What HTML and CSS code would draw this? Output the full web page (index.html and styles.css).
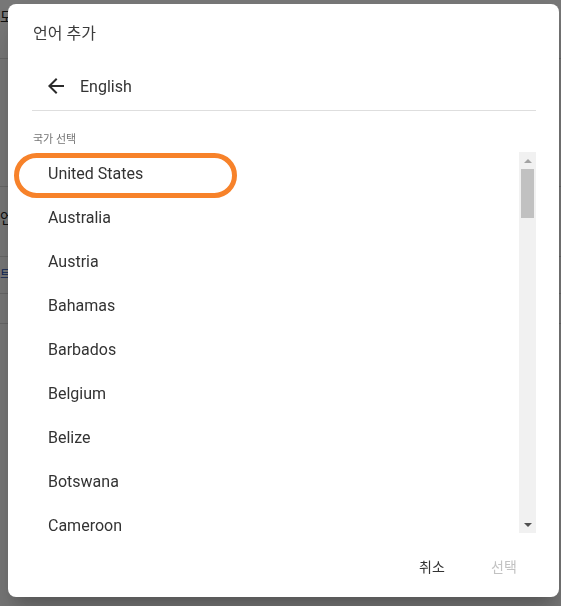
FILE: index.html
```html
<!DOCTYPE html>
<html lang="ko">
<head>
<meta charset="utf-8">
<title>언어 추가</title>
<link rel="stylesheet" href="styles.css">
</head>
<body>
<div class="page">
  <div class="page-row page-row-top"><span class="page-text">도구</span></div>
  <div class="page-row page-row-tall"></div>
  <div class="page-row page-row-mid"><span class="page-text">언어</span></div>
  <div class="page-row page-row-link"><span class="page-link">트랜스</span></div>
  <div class="page-row page-row-small"></div>
</div>
<div class="scrim"></div>
<div class="dialog">
  <div class="dialog-title">언어 추가</div>
  <div class="nav-row">
    <svg class="back-icon" viewBox="0 0 24 24" width="24" height="24" aria-hidden="true">
      <path d="M20 11H7.83l5.59-5.59L12 4l-8 8 8 8 1.41-1.41L7.83 13H20v-2z" fill="#2b2b2b"/>
    </svg>
    <span class="nav-text">English</span>
  </div>
  <div class="section-label">국가 선택</div>
  <div class="list-wrap">
    <ul class="country-list">
      <li>United States</li>
      <li>Australia</li>
      <li>Austria</li>
      <li>Bahamas</li>
      <li>Barbados</li>
      <li>Belgium</li>
      <li>Belize</li>
      <li>Botswana</li>
      <li>Cameroon</li>
    </ul>
    <div class="scrollbar">
      <div class="sb-btn"><span class="tri-up"></span></div>
      <div class="sb-track"><div class="sb-thumb"></div></div>
      <div class="sb-btn"><span class="tri-down"></span></div>
    </div>
  </div>
  <div class="actions">
    <button class="btn">취소</button>
    <button class="btn btn-disabled">선택</button>
  </div>
  <div class="highlight-ring"></div>
</div>
</body>
</html>
```
FILE: styles.css
```css
html, body {
  margin: 0;
  padding: 0;
}
body {
  width: 561px;
  height: 606px;
  overflow: hidden;
  background: #ffffff;
  font-family: Roboto, "Noto Sans CJK KR", sans-serif;
  position: relative;
}
.page {
  display: flex;
  flex-direction: column;
}
.page-row {
  border-bottom: 1px solid #dcdcdc;
  box-sizing: border-box;
  font-size: 14px;
  color: #222;
}
.page-row-top { height: 59px; padding-top: 6px; }
.page-row-tall { height: 128px; }
.page-row-mid { height: 70px; padding-top: 20px; }
.page-row-link { height: 37px; padding-top: 8px; }
.page-row-small { height: 30px; }
.page-link { color: #1a4fb8; font-size: 12px; }

.scrim {
  position: fixed;
  inset: 0;
  background: rgba(0, 0, 0, 0.535);
}
.dialog {
  position: fixed;
  left: 8px;
  top: 4px;
  width: 551px;
  height: 593px;
  background: #ffffff;
  border-radius: 8px;
  box-shadow: 0 11px 15px -7px rgba(0,0,0,.2), 0 24px 38px 3px rgba(0,0,0,.14);
  display: flex;
  flex-direction: column;
  color: #333;
}
.dialog-title {
  padding: 18px 25px 16px;
  font-size: 16px;
  line-height: 24px;
  color: #3c3c3c;
}
.nav-row {
  margin: 0 23px 0 24px;
  height: 48px;
  border-bottom: 1px solid #dedede;
  display: flex;
  align-items: center;
  gap: 12px;
  padding-left: 12px;
}
.back-icon { display: block; }
.nav-text {
  font-size: 16px;
  color: #333;
}
.section-label {
  padding: 21px 25px 0;
  margin-bottom: 4px;
  font-size: 11px;
  line-height: 16px;
  color: #757575;
}
.list-wrap {
  margin: 0 23px 0 24px;
  height: 381px;
  display: flex;
}
.country-list {
  flex: 1;
  list-style: none;
  margin: 0;
  padding: 0;
}
.country-list li {
  box-sizing: border-box;
  height: 44px;
  line-height: 14px;
  padding: 15px 0 15px 16px;
  font-size: 16px;
  color: #333;
}
.country-list li:last-child {
  height: 29px;
  padding-bottom: 0;
}
.scrollbar {
  width: 17px;
  background: #f1f1f1;
  display: flex;
  flex-direction: column;
}
.sb-btn {
  height: 17px;
  display: flex;
  align-items: center;
  justify-content: center;
}
.sb-track {
  flex: 1;
}
.sb-thumb {
  margin: 0 2px;
  height: 49px;
  background: #c1c1c1;
}
.tri-up {
  width: 0;
  height: 0;
  border-left: 4px solid transparent;
  border-right: 4px solid transparent;
  border-bottom: 4px solid #a3a3a3;
}
.tri-down {
  width: 0;
  height: 0;
  border-left: 4px solid transparent;
  border-right: 4px solid transparent;
  border-top: 4px solid #505050;
}
.actions {
  display: flex;
  justify-content: flex-end;
  gap: 8px;
  padding: 15px 23px 13px;
}
.btn {
  width: 64px;
  height: 36px;
  border: none;
  background: transparent;
  font-family: Roboto, "Noto Sans CJK KR", sans-serif;
  font-size: 14px;
  color: #333;
  padding: 0;
}
.btn-disabled {
  color: #c2c2c2;
}
.highlight-ring {
  position: absolute;
  left: 6px;
  top: 149px;
  width: 223px;
  height: 45px;
  box-sizing: border-box;
  border: 5px solid #f7822a;
  border-radius: 23px;
}
```
